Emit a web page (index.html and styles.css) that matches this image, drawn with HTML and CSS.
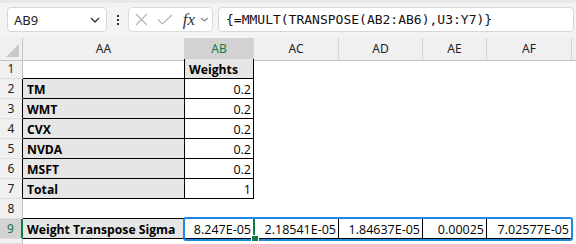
FILE: index.html
```html
<!DOCTYPE html>
<html lang="en">
<head>
    <meta charset="UTF-8">
    <title>Weight Transpose Sigma</title>
    <link rel="stylesheet" href="styles.css">
</head>
<body>

    <!-- Formula bar -->
    <div class="toolbar">
        <div class="namebox">
            <span>AB9</span>
            <svg width="10" height="6" viewBox="0 0 10 6"><path d="M1 1 L5 5 L9 1" fill="none" stroke="#333" stroke-width="1.3"/></svg>
        </div>
        <div class="dots"><i></i><i></i><i></i></div>
        <div class="fxbox">
            <svg width="13" height="13" viewBox="0 0 13 13"><path d="M1 1 L12 12 M12 1 L1 12" stroke="#b4b4b4" stroke-width="1.2"/></svg>
            <svg width="16" height="11" viewBox="0 0 16 11"><path d="M1 5.5 L5.5 10 L15 1" fill="none" stroke="#b4b4b4" stroke-width="1.2"/></svg>
            <span class="fx">fx</span>
            <svg width="9" height="5" viewBox="0 0 9 5"><path d="M1 1 L4.5 4 L8 1" fill="none" stroke="#888" stroke-width="1.1"/></svg>
        </div>
        <div class="formula">{=MMULT(TRANSPOSE(AB2:AB6),U3:Y7)}</div>
    </div>

    <!-- Sheet -->
    <div class="sheet">
        <div class="row heads">
            <div class="corner"><span class="tri"></span></div>
            <div class="colhead">AA</div>
            <div class="colhead on">AB</div>
            <div class="colhead">AC</div>
            <div class="colhead">AD</div>
            <div class="colhead">AE</div>
            <div class="colhead">AF</div>
            <div class="colhead last"></div>
        </div>

        <div class="row">
            <div class="rowhead">1</div>
            <div class="cell b"></div>
            <div class="cell b g bold">Weights</div>
        </div>
        <div class="row">
            <div class="rowhead box">2</div>
            <div class="cell b g bold">TM</div>
            <div class="cell b num">0.2</div>
        </div>
        <div class="row">
            <div class="rowhead box">3</div>
            <div class="cell b g bold">WMT</div>
            <div class="cell b num">0.2</div>
        </div>
        <div class="row">
            <div class="rowhead box">4</div>
            <div class="cell b g bold">CVX</div>
            <div class="cell b num">0.2</div>
        </div>
        <div class="row">
            <div class="rowhead box">5</div>
            <div class="cell b g bold">NVDA</div>
            <div class="cell b num">0.2</div>
        </div>
        <div class="row">
            <div class="rowhead box">6</div>
            <div class="cell b g bold">MSFT</div>
            <div class="cell b num">0.2</div>
        </div>
        <div class="row">
            <div class="rowhead box">7</div>
            <div class="cell b g bold">Total</div>
            <div class="cell b num">1</div>
        </div>
        <div class="row">
            <div class="rowhead">8</div>
            <div class="cell bt"></div>
            <div class="cell bt"></div>
            <div class="cell bt"></div>
            <div class="cell bt"></div>
            <div class="cell bt"></div>
            <div class="cell bt"></div>
        </div>
        <div class="row">
            <div class="rowhead on">9</div>
            <div class="cell b g bold">Weight Transpose Sigma</div>
            <div class="cell b num">8.247E-05</div>
            <div class="cell b num">2.18541E-05</div>
            <div class="cell b num">1.84637E-05</div>
            <div class="cell b num">0.00025</div>
            <div class="cell b num">7.02577E-05</div>
        </div>
        <div class="row rest">
            <div class="rowhead"></div>
        </div>

        <!-- selection over AB9:AF9 -->
        <div class="selection"></div>
        <div class="active-edge"></div>
    </div>

</body>
</html>
```

FILE: styles.css
```css
* {
    box-sizing: border-box;
}

body {
    margin: 0;
    width: 576px;
    height: 244px;
    overflow: hidden;
    background-color: #fff;
    font-family: 'Open Sans', 'Liberation Sans', sans-serif;
    color: #000;
}

/* ---------- formula bar ---------- */

.toolbar {
    height: 38px;
    background-color: #f3f3f3;
    border-top: 3px solid #e8e8e8;
    display: flex;
    align-items: flex-start;
    padding: 4px 2px 0 7px;
}

.namebox {
    width: 100px;
    height: 25px;
    background-color: #fff;
    border: 1px solid #d6d6d6;
    border-radius: 4px;
    display: flex;
    align-items: center;
    justify-content: space-between;
    padding: 0 6px 0 6px;
    font-family: 'Noto Sans', sans-serif;
    font-size: 13px;
    color: #222;
}

.dots {
    width: 21px;
    height: 25px;
    display: flex;
    flex-direction: column;
    align-items: center;
    justify-content: center;
    gap: 2px;
}

.dots i {
    width: 2px;
    height: 2px;
    background-color: #2b3a30;
}

.fxbox {
    width: 85px;
    height: 25px;
    background-color: #fff;
    border: 1px solid #dcdcdc;
    border-radius: 4px;
    display: flex;
    align-items: center;
    padding: 0 3px 0 6px;
}

.fxbox svg:nth-child(2) {
    margin-left: 9px;
}

.fx {
    font-family: 'Liberation Serif', serif;
    font-style: italic;
    font-size: 17px;
    color: #333;
    margin-left: 10px;
    margin-right: 5px;
    line-height: 1;
}

.formula {
    flex: 1;
    height: 25px;
    margin-left: 5px;
    background-color: #fff;
    border: 1px solid #d6d6d6;
    border-radius: 4px;
    font-family: 'DejaVu Sans Mono', monospace;
    font-size: 13px;
    line-height: 23px;
    padding-left: 7px;
    color: #111;
    white-space: nowrap;
}

/* ---------- sheet ---------- */

.sheet {
    position: relative;
    height: 206px;
}

.row {
    display: grid;
    grid-template-columns: 23px 162px 69px 85px 84px 64px 85px 1fr;
    height: 20px;
}

.row.heads {
    height: 21px;
}

.row.rest {
    height: 5px;
}

.corner,
.colhead {
    background-color: #f0f0f0;
    border-bottom: 1px solid #c4c4c4;
}

.corner {
    border-right: 1px solid #c4c4c4;
    position: relative;
}

.tri {
    position: absolute;
    right: 3px;
    bottom: 3px;
    width: 0;
    height: 0;
    border-left: 13px solid transparent;
    border-bottom: 13px solid #c8c8c8;
}

.colhead {
    border-right: 1px solid #d4d4d4;
    font-family: 'Noto Sans', sans-serif;
    font-size: 12px;
    color: #222;
    text-align: center;
    line-height: 20px;
    padding-top: 1px;
}

.colhead.on {
    background-color: #d2d2d2;
    color: #107c41;
    border-bottom: 2px solid #107c41;
}

.colhead.last {
    border-right: none;
}

.rowhead {
    background-color: #f0f0f0;
    border-right: 1px solid #c4c4c4;
    border-bottom: 1px solid #dedede;
    font-family: 'Noto Sans', sans-serif;
    font-size: 12px;
    color: #222;
    text-align: center;
    line-height: 19px;
}

.rowhead.box {
    border-right-color: #000;
}

.rowhead.on {
    background-color: #d2d2d2;
    color: #107c41;
    border-right: 2px solid #107c41;
}

.cell {
    font-size: 12.5px;
    line-height: 18px;
    padding: 2px 2px 0 4px;
    white-space: nowrap;
    overflow: hidden;
}

.b {
    border-right: 1px solid #000;
    border-bottom: 1px solid #000;
}

.bt {
    border-bottom: 1px solid #000;
}

.g {
    background-color: #e7e6e6;
}

.bold {
    font-weight: bold;
    font-size: 12.2px;
}

.num {
    text-align: right;
}

.selection {
    position: absolute;
    left: 183px;
    top: 179px;
    width: 390px;
    height: 24px;
    border: 2px solid #1e88e5;
    border-radius: 3px;
}

.active-edge {
    position: absolute;
    left: 253px;
    top: 181px;
    width: 2px;
    height: 20px;
    background-color: #107c41;
}

.active-edge::after {
    content: "";
    position: absolute;
    left: -2px;
    bottom: -3px;
    width: 6px;
    height: 5px;
    background-color: #107c41;
    border: 1px solid #fff;
}
```
